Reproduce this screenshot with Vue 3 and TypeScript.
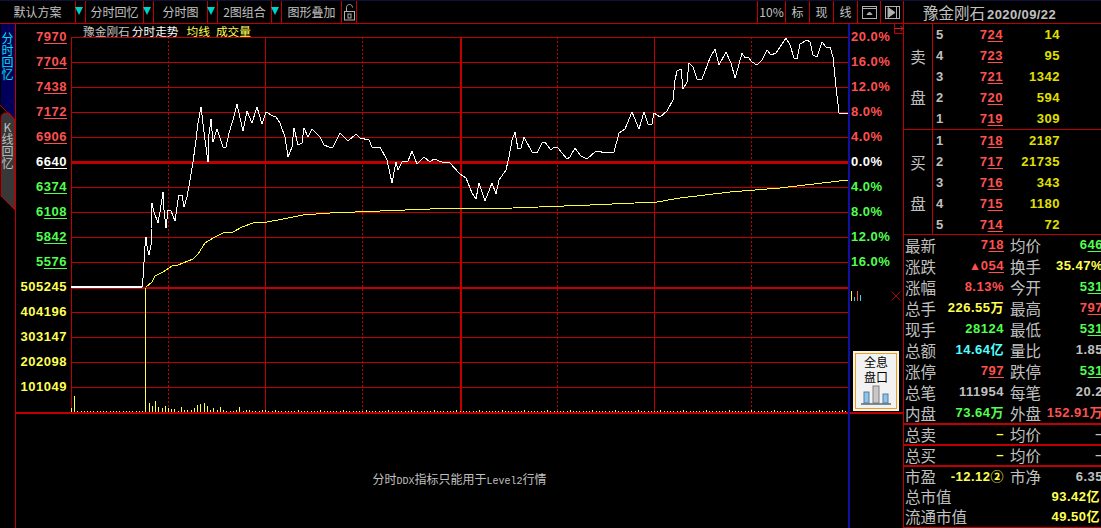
<script setup lang="ts">
interface Level {
  no: number;
  price: string;
  vol: string;
}
interface Stat {
  label: string;
  value: string;
  tone: string;
  tail?: string;
}

const leftScale = [
  { text: "7970", tone: "red" },
  { text: "7704", tone: "red" },
  { text: "7438", tone: "red" },
  { text: "7172", tone: "red" },
  { text: "6906", tone: "red" },
  { text: "6640", tone: "white" },
  { text: "6374", tone: "green" },
  { text: "6108", tone: "green" },
  { text: "5842", tone: "green" },
  { text: "5576", tone: "green" },
];
const volScale = ["505245", "404196", "303147", "202098", "101049"];
const rightScale = [
  { text: "20.0%", tone: "red" },
  { text: "16.0%", tone: "red" },
  { text: "12.0%", tone: "red" },
  { text: "8.0%", tone: "red" },
  { text: "4.0%", tone: "red" },
  { text: "0.0%", tone: "white" },
  { text: "4.0%", tone: "green" },
  { text: "8.0%", tone: "green" },
  { text: "12.0%", tone: "green" },
  { text: "16.0%", tone: "green" },
];

const sell: Level[] = [
  { no: 5, price: "724", vol: "14" },
  { no: 4, price: "723", vol: "95" },
  { no: 3, price: "721", vol: "1342" },
  { no: 2, price: "720", vol: "594" },
  { no: 1, price: "719", vol: "309" },
];
const buy: Level[] = [
  { no: 1, price: "718", vol: "2187" },
  { no: 2, price: "717", vol: "21735" },
  { no: 3, price: "716", vol: "343" },
  { no: 4, price: "715", vol: "1180" },
  { no: 5, price: "714", vol: "72" },
];

const stats: Stat[][] = [
  [{ label: "最新", value: "718", tone: "red", tail: "u" }, { label: "均价", value: "646", tone: "green", tail: "u" }],
  [{ label: "涨跌", value: "054", tone: "red", tail: "up" }, { label: "换手", value: "35.47%", tone: "yellow" }],
  [{ label: "涨幅", value: "8.13%", tone: "red" }, { label: "今开", value: "531", tone: "green", tail: "u" }],
  [{ label: "总手", value: "226.55万", tone: "yellow" }, { label: "最高", value: "797", tone: "red", tail: "u" }],
  [{ label: "现手", value: "28124", tone: "green" }, { label: "最低", value: "531", tone: "green", tail: "u" }],
  [{ label: "总额", value: "14.64亿", tone: "cyan" }, { label: "量比", value: "1.85", tone: "gray" }],
  [{ label: "涨停", value: "797", tone: "red", tail: "u" }, { label: "跌停", value: "531", tone: "green", tail: "u" }],
  [{ label: "总笔", value: "111954", tone: "gray" }, { label: "每笔", value: "20.2", tone: "gray" }],
  [{ label: "内盘", value: "73.64万", tone: "green" }, { label: "外盘", value: "152.91万", tone: "red" }],
];

const gridY = [62, 87, 112, 137, 187, 212, 237, 262, 312, 337, 362, 387];
const dottedX = [168, 362, 557, 751];
const solidX = [265, 654];

const price =
  "142,287 143,278 144,262 145,246 146,237 147,246 149,255 151,245 151,229 152,203 154,212 158,223 160,212 163,192 164,210 166,228 168,210 171,211 175,221 178,200 179,195 182,195 184,207 187,197 190,180 " +
  "193,162 196,140 198,123 201,107 205,140 208,162 208,142 211,119 213,142 217,129 223,147 226,147 229,133 233,120 237,104 243,131 247,111 252,123 257,107 262,124 266,112 273,116 276,117 280,123 285,137 288,157 292,147 294,128 298,145 302,143 304,128 308,137 312,129 320,137 324,145 329,147 333,147 340,133 348,141 356,134 360,138 369,140 372,147 380,147 387,160 392,183 396,162 398,170 402,162 408,161 412,151 417,164 424,157 430,162 " +
  "434,159 442,162 450,163 460,174 466,178 472,193 476,199 479,183 485,201 492,183 496,194 499,180 506,170 509,157 512,140 515,132 518,149 521,148 524,137 532,152 537,153 542,143 545,142 551,150 554,147 558,148 562,153 567,159 570,157 575,148 581,156 587,159 596,151 607,153 614,152 619,133 625,129 632,112 639,129 644,112 648,124 652,124 654,113 660,117 667,111 673,100 675,80 677,71 681,69 683,89 687,82 689,63 693,67 697,79 702,79 710,58 715,49 719,65 726,52 731,63 735,78 738,68 742,53 745,58 748,57 752,62 757,65 762,60 767,50 771,55 776,53 786,38 790,45 794,58 797,59 800,44 807,40 810,42 813,55 817,57 822,42 826,47 830,47 833,57 836,87 839,113 848,113";
const average =
  "146,287 152,282 155,276 163,272 172,266 178,265 193,259 198,254 205,243 213,238 223,233 233,232 242,227 253,223 267,222 283,219 303,215 330,213 430,209 513,208 590,205 657,202 680,198 730,192 780,188 848,180";

const earlyBars = [
  4, 16, 1, 1, 1, 1, 1, 1, 1, 1, 1, 1, 1, 1, 1, 1, 1, 1, 1, 1, 1, 1, 1, 124,
  9, 6, 11, 5, 4, 6, 4, 3, 3, 1, 5, 2, 2, 2, 4, 7, 8, 9, 6, 2, 4, 2, 5, 2, 1, 1, 1, 2, 5, 1, 2, 2, 1, 1, 1, 2, 2,
];
const bars = Array.from({ length: 240 }, (_, i) => ({
  x: Math.round(70.8 + i * 3.24),
  h: earlyBars[i] ?? (i % 7 === 0 ? 2 : 1),
}));

const head = (s: string) => s.slice(0, -2);
const tail = (s: string) => s.slice(-2);
</script>

<template>
  <div class="app">
    <header class="toolbar">
      <div class="tool" style="width: 76px">默认方案</div>
      <div class="drop"><i></i></div>
      <div class="tool" style="width: 58px">分时回忆</div>
      <div class="drop"><i></i></div>
      <div class="tool" style="width: 54px">分时图</div>
      <div class="drop"><i></i></div>
      <div class="tool" style="width: 54px">2图组合</div>
      <div class="drop"><i></i></div>
      <div class="tool" style="width: 60px">图形叠加</div>
      <div class="tool" style="width: 15px">
        <svg width="13" height="17" viewBox="0 0 13 17" fill="none" stroke="#b0b0b0">
          <path d="M3.5 7V3.5C3.5 1.5 5 .5 6.5 .5S9.5 1.5 9.5 3.5" />
          <rect x="1.5" y="7.5" width="10" height="8.5" />
          <rect x="5" y="10" width="3" height="4" />
        </svg>
      </div>
      <div class="spacer"></div>
      <div class="tool small" style="width: 29px">10%</div>
      <div class="tool" style="width: 24px">标</div>
      <div class="tool" style="width: 24px">现</div>
      <div class="tool" style="width: 24px">线</div>
      <div class="tool" style="width: 23px">
        <svg width="15" height="13" viewBox="0 0 15 13" fill="none" stroke="#b0b0b0">
          <rect x=".5" y=".5" width="14" height="12" />
          <path d="M1 2.5H14" />
          <path d="M5 8.5H10L7.5 6Z" fill="#b0b0b0" />
        </svg>
      </div>
      <div class="tool" style="width: 23px">
        <svg width="15" height="13" viewBox="0 0 15 13" fill="none" stroke="#b0b0b0">
          <rect x=".5" y=".5" width="14" height="12" />
          <path d="M3 1.5V11.5L10 6.5Z" fill="#b0b0b0" />
          <path d="M11.5 1V12" />
        </svg>
      </div>
      <div class="title">豫金刚石<b>2020/09/22</b></div>
    </header>

    <main class="main">
      <aside class="tabs">
        <svg class="tab-shape" width="16" height="190" viewBox="0 0 16 190">
          <path d="M0 0H15V95L1 81V0Z" fill="#00005a" />
          <path d="M1 96Q1 89 5 89H9L15 96V186L1 172Z" fill="#383838" stroke="#c00000" />
          <path d="M0 81L15 96" stroke="#c00000" />
        </svg>
        <div class="tab-text active">分时回忆</div>
        <div class="tab-text">K线回忆</div>
      </aside>

      <section class="center">
        <div class="chart-row">
          <div class="scale-left">
            <div v-for="row in leftScale" :key="row.text" class="scale-row num" :class="row.tone">
              {{ row.text.slice(0, 1) }}<u>{{ row.text.slice(1) }}</u>
            </div>
            <div v-for="row in volScale" :key="row" class="scale-row num yellow">{{ row }}</div>
          </div>
          <div class="plot">
            <div class="plot-head">
              <span class="gray">豫金刚石</span><span class="white">分时走势</span>
              <span class="yellow legend">均线</span><span class="yellow legend2">成交量</span>
            </div>
            <svg class="plot-svg" width="777" height="375" viewBox="71 37 777 375">
              <g shape-rendering="crispEdges" stroke="#c00000" fill="none">
                <path d="M71 37.5H848" />
                <path d="M71.5 37V412" />
                <path v-for="y in gridY" :key="y" :d="`M71 ${y + 0.5}H848`" />
                <path d="M71 162H848" stroke-width="3" />
                <path d="M71 287.5H848" stroke-width="2" />
                <path v-for="x in dottedX" :key="x" :d="`M${x + 0.5} 37V412`" stroke-dasharray="2 2" />
                <path v-for="x in solidX" :key="x" :d="`M${x + 0.5} 37V412`" />
                <path d="M461 37V412" stroke-width="2" />
              </g>
              <g shape-rendering="crispEdges" fill="#ffff50">
                <rect v-for="(b, i) in bars" :key="i" :x="b.x" :y="412 - b.h" width="1" :height="b.h" />
              </g>
              <polyline :points="average" fill="none" stroke="#ffff30" shape-rendering="crispEdges" />
              <polyline :points="price" fill="none" stroke="#ffffff" shape-rendering="crispEdges" />
              <path d="M71 286.5H142" stroke="#ffffff" stroke-width="2" shape-rendering="crispEdges" />
            </svg>
          </div>
        </div>
        <div class="ddx">
          <span>分时<em>DDX</em>指标只能用于<em>Level2</em>行情</span>
        </div>
      </section>

      <aside class="scale-right">
        <div class="scale-upper">
          <div class="jump">
            <svg width="9" height="7" viewBox="0 0 9 7" fill="none" stroke="#e02020">
              <path d="M0 3.5H8M5.5 1L8 3.5L5.5 6" />
            </svg>
          </div>
          <div v-for="(row, i) in rightScale" :key="i" class="scale-row pct num" :class="row.tone">{{ row.text }}</div>
          <div class="mini">
            <svg width="12" height="11" viewBox="0 0 12 11" shape-rendering="crispEdges">
              <rect x="0" y="0" width="1" height="10" fill="#ffff30" />
              <rect x="3" y="6" width="1" height="4" fill="#30d0f0" />
              <rect x="6" y="0" width="1" height="10" fill="#ff5040" />
              <rect x="9" y="4" width="1" height="6" fill="#30d0f0" />
            </svg>
            <svg width="10" height="10" viewBox="0 0 10 10" stroke="#a00000" fill="none">
              <path d="M.5 .5L9.5 9.5M9.5 .5L.5 9.5" />
            </svg>
          </div>
          <button class="full" type="button">
            <span class="full-text">全息<br />盘口</span>
            <svg width="30" height="20" viewBox="0 0 30 20">
              <rect x="3" y="7" width="5" height="11" fill="#8cc4ee" stroke="#5a7a96" />
              <rect x="12" y="1" width="6" height="17" fill="#c8c8c8" stroke="#808080" />
              <rect x="22" y="9" width="5" height="9" fill="#8cc4ee" stroke="#5a7a96" />
              <path d="M0 19H30" stroke="#5a6a76" stroke-width="1.5" />
            </svg>
          </button>
        </div>
      </aside>

      <aside class="panel">
        <div class="book sell-book">
          <div class="side"><span>卖</span><span>盘</span></div>
          <div class="levels">
            <div v-for="row in sell" :key="row.no" class="level num">
              <span class="gray">{{ row.no }}</span>
              <span class="red price">{{ head(row.price) }}<u>{{ tail(row.price) }}</u></span>
              <span class="vol">{{ row.vol }}</span>
            </div>
          </div>
        </div>
        <div class="book buy-book">
          <div class="side"><span>买</span><span>盘</span></div>
          <div class="levels">
            <div v-for="row in buy" :key="row.no" class="level num">
              <span class="gray">{{ row.no }}</span>
              <span class="red price">{{ head(row.price) }}<u>{{ tail(row.price) }}</u></span>
              <span class="vol">{{ row.vol }}</span>
            </div>
          </div>
        </div>

        <div class="stats">
          <div v-for="row in stats" :key="row[0].label" class="stat-row">
            <div v-for="cell in row" :key="cell.label" class="cell">
              <span class="label">{{ cell.label }}</span>
              <span class="value num" :class="cell.tone">
                <template v-if="cell.tail === 'up'"><span class="tri">▲</span>0<u>54</u></template>
                <template v-else-if="cell.tail === 'u'">{{ head(cell.value) }}<u>{{ tail(cell.value) }}</u></template>
                <template v-else>{{ cell.value }}</template>
              </span>
            </div>
          </div>
        </div>

        <div class="stat-row boxed">
          <div class="cell"><span class="label">总卖</span><span class="value num yellow">–</span></div>
          <div class="cell"><span class="label">均价</span><span class="value num gray">–</span></div>
        </div>
        <div class="stat-row boxed">
          <div class="cell"><span class="label">总买</span><span class="value num yellow">–</span></div>
          <div class="cell"><span class="label">均价</span><span class="value num gray">–</span></div>
        </div>
        <div class="tail-block">
          <div class="stat-row">
            <div class="cell"><span class="label">市盈</span><span class="value num yellow">-12.12②</span></div>
            <div class="cell"><span class="label">市净</span><span class="value num gray">6.35</span></div>
          </div>
          <div class="stat-row wide">
            <span class="label">总市值</span><span class="value num yellow">93.42亿</span>
          </div>
          <div class="stat-row wide">
            <span class="label">流通市值</span><span class="value num yellow">49.50亿</span>
          </div>
        </div>
      </aside>
    </main>
  </div>
</template>

<style scoped>
.app {
  width: 1101px;
  height: 528px;
  overflow: hidden;
  background: #000;
  color: #c0c0c0;
  font-family: "Noto Sans CJK SC", "Liberation Sans", sans-serif;
  font-size: 12px;
  display: flex;
  flex-direction: column;
}

.red { color: #ff5050; }
.green { color: #50ff50; }
.yellow { color: #ffff50; }
.cyan { color: #50ffff; }
.white { color: #ffffff; }
.gray { color: #c0c0c0; }

.num {
  font-family: "Liberation Sans", "Noto Sans CJK SC", sans-serif;
  font-weight: 700;
  font-size: 13px;
  letter-spacing: 0.5px;
}

.num u {
  text-decoration: underline;
  text-decoration-thickness: 1px;
  text-underline-offset: 2px;
}

.toolbar {
  height: 24px;
  flex: none;
  display: flex;
  border-top: 1px solid #10103a;
  border-bottom: 1px solid #c00000;
  box-sizing: border-box;
}

.tool {
  flex: none;
  box-sizing: border-box;
  border-right: 1px solid #c00000;
  display: flex;
  align-items: center;
  justify-content: center;
  line-height: 22px;
}

.tool.small {
  font-size: 12px;
  border-left: 1px solid #c00000;
  width: 30px;
}

.drop {
  flex: none;
  width: 10px;
  box-sizing: border-box;
  border-right: 1px solid #c00000;
  display: flex;
  justify-content: flex-end;
  padding: 6px 2px 0 0;
}

.drop i {
  width: 0;
  height: 0;
  border-left: 4px solid transparent;
  border-right: 4px solid transparent;
  border-top: 8px solid #00d0c8;
}

.spacer {
  flex: 1;
}

.title {
  flex: none;
  width: 197px;
  box-sizing: border-box;
  padding-left: 19px;
  font-size: 15.5px;
  line-height: 23px;
  white-space: nowrap;
}

.title b {
  font-family: "Liberation Sans", sans-serif;
  font-size: 13px;
  letter-spacing: 0.4px;
  margin-left: 2px;
}

.main {
  flex: 1;
  display: flex;
  min-height: 0;
}

.tabs {
  position: relative;
  flex: none;
  width: 16px;
  box-sizing: border-box;
  border-right: 1px solid #c00000;
}

.tab-shape {
  position: absolute;
  left: 0;
  top: 0;
}

.tab-text {
  position: relative;
  width: 15px;
  height: 48px;
  margin-top: 41px;
  line-height: 12px;
  text-align: center;
  word-break: break-all;
  padding: 0 1px;
  box-sizing: border-box;
  font-size: 12px;
}

.tab-text.active {
  margin-top: 8px;
  color: #00e0e0;
}

.center {
  flex: none;
  width: 832px;
  display: flex;
  flex-direction: column;
}

.chart-row {
  height: 390px;
  flex: none;
  box-sizing: border-box;
  display: flex;
  border-bottom: 2px solid #c00000;
}

.scale-left {
  flex: none;
  width: 55px;
  box-sizing: border-box;
  padding-right: 4px;
}

.scale-row {
  height: 25px;
  line-height: 26px;
  text-align: right;
  white-space: nowrap;
}

.plot {
  flex: none;
  width: 777px;
}

.plot-head {
  height: 13px;
  line-height: 13px;
  padding-left: 12px;
  font-size: 11.7px;
  white-space: nowrap;
}

.plot-head .white {
  margin-left: 2px;
}

.legend {
  margin-left: 8px;
}

.legend2 {
  margin-left: 6px;
}

.plot-svg {
  display: block;
}

.ddx {
  flex: 1;
  padding: 56px 0 0 55px;
  text-align: center;
  color: #c0c0c0;
  font-size: 12px;
}

.ddx em {
  font-style: normal;
  font-family: "Liberation Mono", monospace;
  font-size: 10px;
}

.scale-right {
  flex: none;
  width: 56px;
  box-sizing: border-box;
  border-left: 2px solid #1010a0;
  border-right: 1px solid #c00000;
}

.scale-upper {
  position: relative;
  height: 390px;
  box-sizing: border-box;
  border-bottom: 2px solid #c00000;
  margin-right: -1px;
}

.pct {
  text-align: left;
  padding-left: 1px;
}

.jump {
  position: absolute;
  right: 0;
  top: 0;
  width: 10px;
  height: 10px;
  box-sizing: border-box;
  border: 1px solid #c00000;
  border-top: 0;
  border-right: 0;
  display: flex;
  align-items: center;
  justify-content: center;
}

.mini {
  margin-top: 17px;
  height: 11px;
  padding: 0 3px 0 1px;
  display: flex;
  justify-content: space-between;
}

.full {
  display: flex;
  flex-direction: column;
  align-items: center;
  width: 46px;
  height: 60px;
  margin: 49px 0 0 3px;
  padding: 3px 0 0;
  box-sizing: border-box;
  background: #f2f2f2;
  border: 0;
  outline: 1px solid #f0a010;
  outline-offset: -3px;
  color: #000;
  font-family: "Noto Sans CJK SC", sans-serif;
  font-size: 12px;
  line-height: 15px;
}

.full-text {
  display: block;
  margin-bottom: 1px;
}

.panel {
  flex: none;
  width: 197px;
  overflow: hidden;
}

.book {
  height: 106px;
  box-sizing: border-box;
  display: flex;
  border-bottom: 1px solid #c00000;
}

.buy-book {
  height: 105px;
}

.side {
  flex: none;
  width: 29px;
  box-sizing: border-box;
  border-right: 1px solid #c00000;
  display: flex;
  flex-direction: column;
  align-items: center;
  justify-content: center;
  gap: 21px;
  font-size: 15.5px;
  line-height: 20px;
}

.levels {
  flex: 1;
  padding-left: 3px;
}

.level {
  height: 21px;
  line-height: 21px;
  display: grid;
  grid-template-columns: 10px 57px 57px;
}

.price {
  text-align: right;
}

.vol {
  text-align: right;
  color: #e0e000;
}

.stats {
  height: 188px;
}

.stat-row {
  display: flex;
  height: 21px;
  line-height: 21px;
  white-space: nowrap;
}

.stats .stat-row {
  line-height: 20px;
}

.cell {
  flex: none;
  display: flex;
  justify-content: space-between;
  width: 100px;
  padding-left: 1px;
  box-sizing: border-box;
}

.cell + .cell {
  width: 93px;
  margin-left: 6px;
  padding-left: 0;
}

.label {
  font-size: 15.5px;
  color: #c0c0c0;
}

.tri {
  font-size: 12px;
  letter-spacing: 0;
}

.boxed {
  box-sizing: border-box;
  border-top: 2px solid #c00000;
  line-height: 18px;
}

.tail-block {
  border-top: 2px solid #c00000;
  border-bottom: 2px solid #c00000;
}

.tail-block .stat-row {
  height: 20px;
  line-height: 19px;
}

.wide {
  justify-content: space-between;
  padding: 0 1px;
}
</style>

<style>
html,
body {
  background: #000;
}
</style>
